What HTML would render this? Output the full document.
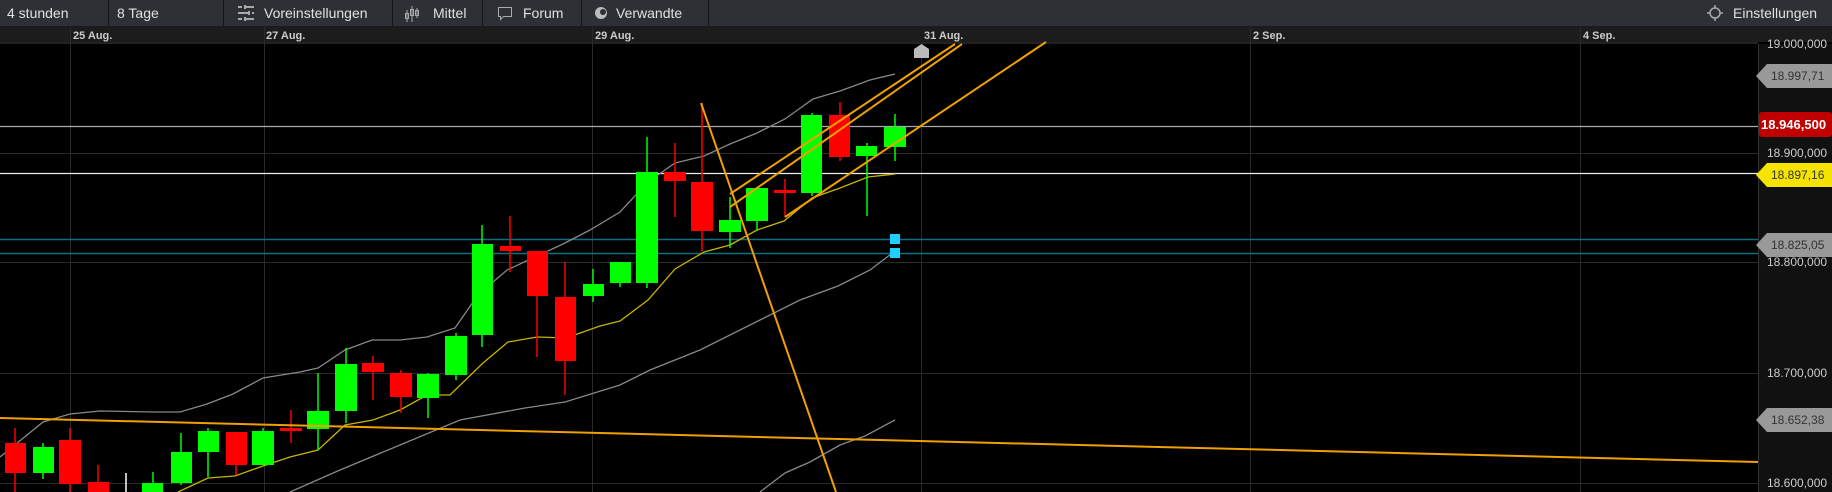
<!DOCTYPE html>
<html><head><meta charset="utf-8"><style>
body{margin:0;background:#000;width:1832px;height:492px;overflow:hidden;font-family:"Liberation Sans",sans-serif}
.tb{position:absolute;left:0;top:0;width:1832px;height:26px;background:#2d3135;border-bottom:1px solid #1a1a1a}
.b{position:absolute;top:0;height:26px;line-height:26px;color:#e0e0e0;font-size:14px;border-right:1px solid #151515;box-sizing:border-box;padding-left:7px}
</style></head><body>
<div class="tb">
<div class="b" style="left:0;width:109px">4 stunden</div>
<div class="b" style="left:109px;width:115px;padding-left:8px">8 Tage</div>
<div class="b" style="left:224px;width:169px;padding-left:40px">Voreinstellungen</div>
<div class="b" style="left:393px;width:90px;padding-left:40px">Mittel</div>
<div class="b" style="left:483px;width:99px;padding-left:40px">Forum</div>
<div class="b" style="left:582px;width:127px;padding-left:34px">Verwandte</div>
<div class="b" style="left:1727px;width:105px;border:none;padding-left:6px">Einstellungen</div>
</div>
<svg width="1832" height="492" style="position:absolute;left:0;top:0" xmlns="http://www.w3.org/2000/svg">
<!-- toolbar icons -->
<g stroke="#aaa" stroke-width="2" fill="none">
<path d="M238 7h4M246 7h8M238 13h10M252 13h2M238 19h4M246 19h8"/>
<path d="M245 5v4M249 11v4M245 17v4"/>
</g>
<g stroke="#aaa" stroke-width="1" fill="none"><path d="M407 10v12M412 6v16M417 8v10"/><rect x="405.5" y="13.5" width="3" height="5"/><rect x="410.5" y="9.5" width="3" height="6"/><rect x="415.5" y="10.5" width="3" height="5"/></g>
<path d="M498.5 7.5h13v9h-8l-3 3v-3h-2z" stroke="#aaa" fill="none"/>
<circle cx="601" cy="13" r="6" fill="#bbb"/><circle cx="603" cy="12" r="3" fill="#2d3135"/>
<g stroke="#aaa" stroke-width="1.5" fill="none"><circle cx="1715" cy="13" r="5"/><path d="M1715 5v3M1715 18v3M1707 13h3M1720 13h3"/></g>
<!-- time row -->
<rect x="0" y="27" width="1832" height="15" fill="#1c1c1c"/>
<rect x="0" y="42" width="1758" height="2" fill="#222"/>
<g font-size="11" font-weight="bold" fill="#ccc">
<text x="73" y="39">25 Aug.</text><text x="266" y="39">27 Aug.</text><text x="595" y="39">29 Aug.</text><text x="924" y="39">31 Aug.</text><text x="1253" y="39">2 Sep.</text><text x="1583" y="39">4 Sep.</text>
</g>
<!-- grid -->
<g stroke="#2a2a2a" stroke-width="1">
<path d="M70.5 27V492M264.5 27V492M592.5 27V492M921.5 44V492M1250.5 27V492M1580.5 27V492"/>
<path d="M0 153.5H1758M0 262.5H1758M0 373.5H1758M0 483.5H1758"/>
</g>
<!-- axis -->
<rect x="1758" y="44" width="74" height="448" fill="#111"/>
<path d="M1758.5 44V492" stroke="#333"/>
<g font-size="12" fill="#ccc">
<text x="1767" y="48">19.000,000</text>
<text x="1767" y="157">18.900,000</text>
<text x="1767" y="266">18.800,000</text>
<text x="1767" y="377">18.700,000</text>
<text x="1767" y="487">18.600,000</text>
</g>
<g font-size="12">
<path d="M1756 76l11-12h65v24h-65z" fill="#999"/><text x="1771" y="80" fill="#333">18.997,71</text>
<rect x="1759" y="112" width="73" height="25" rx="3" fill="#c00000"/><text x="1761" y="129" fill="#fff" font-weight="bold" font-size="13">18.946,500</text>
<path d="M1756 175l11-12h65v24h-65z" fill="#f5e400"/><text x="1771" y="179" fill="#333">18.897,16</text>
<path d="M1756 245l11-12h65v24h-65z" fill="#999"/><text x="1771" y="249" fill="#333">18.825,05</text>
<path d="M1756 420l11-12h65v24h-65z" fill="#999"/><text x="1771" y="424" fill="#333">18.652,38</text>
</g>
<!-- horizontal lines -->
<path d="M0 126.5H1758" stroke="#aaa" stroke-width="1.3"/>
<path d="M0 173.5H1758" stroke="#eee" stroke-width="1.3"/>
<path d="M0 239.5H1758M0 253.5H1758" stroke="#0c6f84" stroke-width="1.6"/>
<!-- MAs -->
<g fill="none" stroke-width="1.3">
<polyline stroke="#888" points="0,457 43,422 70,414 100,411 153,412 180,412 207,404 233,394 263,378 300,372 318,368 345,350 372,340 400,340 427,337 455,328 478,295 507,270 535,257 563,244 590,230 620,212 648,182 675,163 704,156 730,144 757,133 785,119 813,99 840,91 870,80 895,74"/>
<polyline stroke="#c8b400" points="178,492 208,478 235,476 263,466 290,457 318,450 345,425 373,420 400,410 427,395 450,395 483,363 508,342 537,337 566,338 600,326 620,321 648,300 675,269 704,252 730,245 757,230 784,221 812,198 840,188 868,177 895,174"/>
<polyline stroke="#888" points="290,492 340,470 400,445 460,420 525,408 565,402 620,385 650,370 700,350 760,320 800,300 838,286 870,270 895,251"/>
<polyline stroke="#888" points="760,492 785,473 810,462 840,445 865,436 895,420"/>
</g>
<!-- candles -->
<g id="c"></g>
<g stroke-width="1.5">
<path d="M15 428V492" stroke="#f00"/><rect x="5" y="443" width="21" height="30" fill="#f00"/>
<path d="M43 443V479" stroke="#0f0"/><rect x="33" y="447" width="21" height="26" fill="#0f0"/>
<path d="M70 428V492" stroke="#f00"/><rect x="59" y="440" width="22" height="44" fill="#f00"/>
<path d="M98 465V492" stroke="#f00"/><rect x="88" y="482" width="21" height="10" fill="#f00"/>
<path d="M126 473V492" stroke="#fff"/>
<path d="M153 472V492" stroke="#0f0"/><rect x="142" y="483" width="21" height="9" fill="#0f0"/>
<path d="M181 433V485" stroke="#0f0"/><rect x="171" y="452" width="21" height="31" fill="#0f0"/>
<path d="M208 428V477" stroke="#0f0"/><rect x="198" y="431" width="21" height="21" fill="#0f0"/>
<path d="M236 432V475" stroke="#f00"/><rect x="226" y="432" width="21" height="33" fill="#f00"/>
<path d="M263 428V465" stroke="#0f0"/><rect x="252" y="431" width="22" height="34" fill="#0f0"/>
<path d="M291 410V443" stroke="#f00"/><rect x="280" y="428" width="22" height="3" fill="#f00"/>
<path d="M318 373V450" stroke="#0f0"/><rect x="307" y="411" width="22" height="18" fill="#0f0"/>
<path d="M346 348V423" stroke="#0f0"/><rect x="335" y="364" width="22" height="47" fill="#0f0"/>
<path d="M373 356V400" stroke="#f00"/><rect x="362" y="363" width="22" height="9" fill="#f00"/>
<path d="M401 370V413" stroke="#f00"/><rect x="390" y="373" width="22" height="24" fill="#f00"/>
<path d="M428 373V418" stroke="#0f0"/><rect x="417" y="374" width="22" height="24" fill="#0f0"/>
<path d="M456 333V380" stroke="#0f0"/><rect x="445" y="336" width="22" height="39" fill="#0f0"/>
<path d="M482 225V347" stroke="#0f0"/><rect x="472" y="244" width="21" height="91" fill="#0f0"/>
<path d="M510 216V272" stroke="#f00"/><rect x="500" y="246" width="21" height="5" fill="#f00"/>
<path d="M537 251V357" stroke="#f00"/><rect x="527" y="251" width="21" height="45" fill="#f00"/>
<path d="M565 262V395" stroke="#f00"/><rect x="555" y="297" width="21" height="64" fill="#f00"/>
<path d="M593 269V302" stroke="#0f0"/><rect x="583" y="284" width="21" height="12" fill="#0f0"/>
<path d="M620 262V287" stroke="#0f0"/><rect x="610" y="262" width="21" height="21" fill="#0f0"/>
<path d="M647 137V288" stroke="#0f0"/><rect x="636" y="172" width="22" height="111" fill="#0f0"/>
<path d="M675 143V217" stroke="#f00"/><rect x="664" y="172" width="22" height="9" fill="#f00"/>
<path d="M702 103V251" stroke="#f00"/><rect x="691" y="182" width="22" height="49" fill="#f00"/>
<path d="M730 197V248" stroke="#0f0"/><rect x="719" y="220" width="22" height="12" fill="#0f0"/>
<path d="M757 188V231" stroke="#0f0"/><rect x="746" y="188" width="22" height="33" fill="#0f0"/>
<path d="M785 179V217" stroke="#f00"/><rect x="774" y="190" width="22" height="3" fill="#f00"/>
<path d="M812 113V196" stroke="#0f0"/><rect x="801" y="115" width="21" height="78" fill="#0f0"/>
<path d="M840 102V161" stroke="#f00"/><rect x="829" y="115" width="21" height="42" fill="#f00"/>
<path d="M867 143V216" stroke="#0f0"/><rect x="856" y="146" width="21" height="10" fill="#0f0"/>
<path d="M895 114V161" stroke="#0f0"/><rect x="884" y="127" width="22" height="20" fill="#0f0"/>
</g>
<rect x="890" y="234" width="10" height="10" fill="#1ed0ff"/>
<rect x="890" y="248" width="10" height="10" fill="#1ed0ff"/>
<!-- orange lines -->
<g stroke="#f0a000" stroke-width="2" fill="none">
<path d="M0 418L1758 462"/>
<path d="M701 103L836 492"/>
<path d="M730 194L955 44"/>
<path d="M730 207L962 44"/>
<path d="M785 217L1046 42"/>
</g>
<path d="M914 58v-9l7.5-5 7.5 5v9z" fill="#bbb"/>
</svg>
</body></html>
